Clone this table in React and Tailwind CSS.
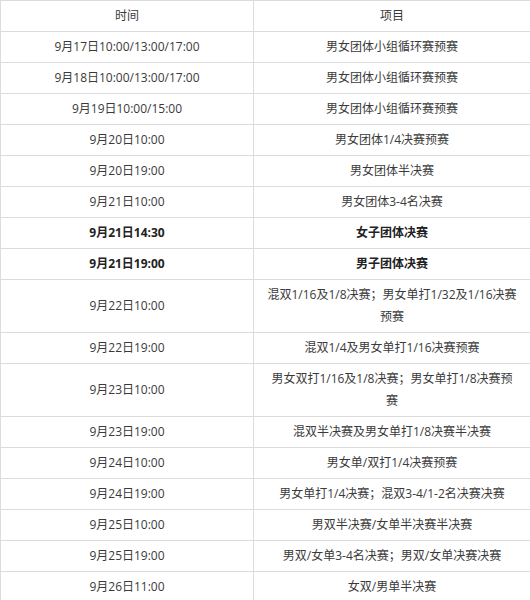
const rows = [
  { time: "9月17日10:00/13:00/17:00", item: ["男女团体小组循环赛预赛"] },
  { time: "9月18日10:00/13:00/17:00", item: ["男女团体小组循环赛预赛"] },
  { time: "9月19日10:00/15:00", item: ["男女团体小组循环赛预赛"] },
  { time: "9月20日10:00", item: ["男女团体1/4决赛预赛"] },
  { time: "9月20日19:00", item: ["男女团体半决赛"] },
  { time: "9月21日10:00", item: ["男女团体3-4名决赛"] },
  { time: "9月21日14:30", item: ["女子团体决赛"], bold: true },
  { time: "9月21日19:00", item: ["男子团体决赛"], bold: true },
  { time: "9月22日10:00", item: ["混双1/16及1/8决赛；男女单打1/32及1/16决赛", "预赛"] },
  { time: "9月22日19:00", item: ["混双1/4及男女单打1/16决赛预赛"] },
  { time: "9月23日10:00", item: ["男女双打1/16及1/8决赛；男女单打1/8决赛预", "赛"] },
  { time: "9月23日19:00", item: ["混双半决赛及男女单打1/8决赛半决赛"] },
  { time: "9月24日10:00", item: ["男女单/双打1/4决赛预赛"] },
  { time: "9月24日19:00", item: ["男女单打1/4决赛；混双3-4/1-2名决赛决赛"] },
  { time: "9月25日10:00", item: ["男双半决赛/女单半决赛半决赛"] },
  { time: "9月25日19:00", item: ["男双/女单3-4名决赛；男双/女单决赛决赛"] },
  { time: "9月26日11:00", item: ["女双/男单半决赛"] },
];

export default function App() {
  const cell = "border border-[#dcdcdc] px-1 py-1 text-center align-middle leading-[22px]";
  return (
    <div className="w-[530px] h-[600px] overflow-hidden bg-white text-[12px] text-[#3a3a3a] font-['Open_Sans','Noto_Sans_CJK_SC',sans-serif]">
      <table className="w-[530px] table-fixed border-collapse">
        <colgroup>
          <col className="w-[253px]" />
          <col className="w-[277px]" />
        </colgroup>
        <thead>
          <tr>
            <td className={cell}>时间</td>
            <td className={cell}>项目</td>
          </tr>
        </thead>
        <tbody>
          {rows.map((r) => (
            <tr key={r.time} className={r.bold ? "font-bold text-[#222]" : ""}>
              <td className={cell}>{r.time}</td>
              <td className={`${cell} whitespace-nowrap`}>
                {r.item.map((line, i) => (
                  <div key={i}>{line}</div>
                ))}
              </td>
            </tr>
          ))}
        </tbody>
      </table>
    </div>
  );
}
